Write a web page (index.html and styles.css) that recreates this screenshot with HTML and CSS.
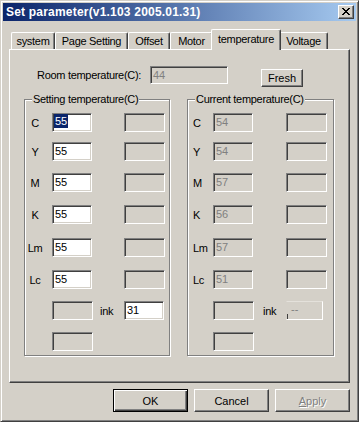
FILE: index.html
```html
<!DOCTYPE html>
<html>
<head>
<meta charset="utf-8">
<title>Set parameter</title>
<link rel="stylesheet" href="styles.css">
</head>
<body>
<div class="window">
  <div class="titlebar">
    <span class="title">Set parameter(v1.103 2005.01.31)</span>
    <div class="close">
      <svg width="14" height="12" viewBox="0 0 14 12" shape-rendering="crispEdges"><path fill="#000" d="M3 2h2v1h-2zM9 2h2v1h-2zM4 3h2v1h-2zM8 3h2v1h-2zM5 4h4v1h-4zM6 5h2v1h-2zM5 6h4v1h-4zM4 7h2v1h-2zM8 7h2v1h-2zM3 8h2v1h-2zM9 8h2v1h-2z"/></svg>
    </div>
  </div>
  <div class="body">
    <div class="tabs">
      <div class="tab w-system">system</div>
      <div class="tab w-page">Page Setting</div>
      <div class="tab w-offset">Offset</div>
      <div class="tab w-motor">Motor</div>
      <div class="tab tab-active w-temp">temperature</div>
      <div class="tab w-volt">Voltage</div>
    </div>
    <div class="panel">
      <div class="room-row">
        <span class="room-label">Room temperature(C):</span>
        <div class="edit dis room-edit">44</div>
        <div class="btn fresh">Fresh</div>
      </div>
      <div class="groups">
        <div class="group group-set">
          <span class="group-title">Setting temperature(C)</span>
          <div class="grid">
            <span class="lbl">C</span><div class="edit"><span class="sel">55</span></div><span></span><div class="edit box"></div>
            <span class="lbl">Y</span><div class="edit">55</div><span></span><div class="edit box"></div>
            <span class="lbl">M</span><div class="edit">55</div><span></span><div class="edit box"></div>
            <span class="lbl">K</span><div class="edit">55</div><span></span><div class="edit box"></div>
            <span class="lbl">Lm</span><div class="edit">55</div><span></span><div class="edit box"></div>
            <span class="lbl">Lc</span><div class="edit">55</div><span></span><div class="edit box"></div>
            <span></span><div class="edit box"></div><span class="ink-lbl">ink</span><div class="edit ink-edit">31</div>
            <span></span><div class="edit box"></div>
          </div>
        </div>
        <div class="group group-cur">
          <span class="group-title">Current temperature(C)</span>
          <div class="grid">
            <span class="lbl">C</span><div class="edit dis">54</div><span></span><div class="edit box"></div>
            <span class="lbl">Y</span><div class="edit dis">54</div><span></span><div class="edit box"></div>
            <span class="lbl">M</span><div class="edit dis">57</div><span></span><div class="edit box"></div>
            <span class="lbl">K</span><div class="edit dis">56</div><span></span><div class="edit box"></div>
            <span class="lbl">Lm</span><div class="edit dis">57</div><span></span><div class="edit box"></div>
            <span class="lbl">Lc</span><div class="edit dis">51</div><span></span><div class="edit box"></div>
            <span></span><div class="edit box"></div><span class="ink-lbl">ink</span><div class="ink-odd">--</div>
            <span></span><div class="edit box"></div>
          </div>
        </div>
      </div>
    </div>
    <div class="buttons">
      <div class="btn btn-default">OK</div>
      <div class="btn">Cancel</div>
      <div class="btn btn-disabled"><span><u>A</u>pply</span></div>
    </div>
  </div>
</div>
</body>
</html>
```
FILE: styles.css
```css
* { box-sizing: border-box; }
html, body { margin: 0; padding: 0; }
body {
  background: #d4d0c8;
  font-family: "Liberation Sans", Arial, sans-serif;
  font-size: 11px;
  letter-spacing: -0.3px;
  color: #000;
}
.window {
  width: 359px;
  height: 422px;
  border: 1px solid;
  border-color: #d4d0c8 #404040 #404040 #d4d0c8;
  box-shadow: inset 1px 1px #fff, inset -1px -1px #808080;
  padding: 2px;
  background: #d4d0c8;
}
.titlebar {
  height: 18px;
  display: flex;
  align-items: center;
  justify-content: space-between;
  background: linear-gradient(to right, #0a246a, #a6caf0);
  padding: 0 2px 0 3px;
}
.title {
  color: #fff;
  font-weight: bold;
  font-size: 12px;
  letter-spacing: 0.2px;
  line-height: 18px;
  white-space: nowrap;
}
.close {
  width: 16px;
  height: 14px;
  background: #d4d0c8;
  border: 1px solid;
  border-color: #fff #404040 #404040 #fff;
  box-shadow: inset -1px -1px #808080;
}
.close svg { display: block; }
.body { padding: 0 6px; }
.tabs {
  display: flex;
  align-items: flex-end;
  height: 20px;
  margin-top: 8px;
  padding-left: 2px;
}
.tab {
  flex: none;
  height: 17px;
  border-top: 1px solid #fff;
  border-left: 1px solid #fff;
  border-right: 1px solid #404040;
  box-shadow: inset -1px 0 #808080;
  border-radius: 2px 2px 0 0;
  text-align: center;
  line-height: 14px;
  padding-top: 1px;
  white-space: nowrap;
  background: #d4d0c8;
}
.w-system { width: 44px; }
.w-page { width: 73px; }
.w-offset { width: 42px; }
.w-motor { width: 43px; }
.w-temp { width: 70px; }
.w-volt { width: 49px; }
.tab-active {
  height: 21px;
  margin: 0 -2px -1px;
  padding-top: 2px;
  position: relative;
  z-index: 1;
}
.panel {
  height: 334px;
  border-top: 1px solid #fff;
  border-left: 1px solid #fff;
  border-right: 1px solid #404040;
  border-bottom: 1px solid #404040;
  box-shadow: inset -1px -1px #808080;
  padding-top: 16px;
}
.room-row {
  display: flex;
  align-items: flex-start;
  height: 21px;
}
.room-label {
  margin-left: 27px;
  width: 113px;
  line-height: 19px;
  white-space: nowrap;
}
.edit {
  width: 40px;
  height: 19px;
  border: 1px solid;
  border-color: #808080 #fff #fff #808080;
  box-shadow: inset 1px 1px #404040, inset -1px -1px #d4d0c8;
  background: #fff;
  padding-left: 2px;
  line-height: 17px;
  letter-spacing: 0;
  white-space: nowrap;
}
.edit.dis { background: #d4d0c8; color: #808080; }
.edit.box { width: 41px; background: #d4d0c8; }
.room-edit { width: 78px; height: 18px; line-height: 16px; }
.sel {
  display: inline-block;
  vertical-align: top;
  background: #0a246a;
  color: #fff;
  line-height: 14px;
  padding: 0 1px;
  margin-left: -1px;
}
.btn {
  flex: none;
  width: 75px;
  height: 23px;
  border: 1px solid;
  border-color: #fff #404040 #404040 #fff;
  box-shadow: inset -1px -1px #808080;
  display: flex;
  align-items: center;
  justify-content: center;
  background: #d4d0c8;
  letter-spacing: 0;
}
.fresh {
  width: 42px;
  height: 18px;
  margin-left: 33px;
  margin-top: 3px;
}
.btn-default {
  border-color: #000;
  box-shadow: inset 1px 1px #fff, inset -1px -1px #404040, inset -2px -2px #808080;
}
.btn-disabled { color: #808080; text-shadow: 1px 1px #fff; }
.groups {
  display: flex;
  gap: 17px;
  margin-top: 12px;
  margin-left: 14px;
}
.group {
  position: relative;
  height: 257px;
  border: 1px solid #808080;
  box-shadow: inset 1px 1px #fff, 1px 1px #fff;
  padding-top: 13px;
}
.group-set { width: 146px; }
.group-cur { width: 147px; }
.group-title {
  position: absolute;
  top: -7px;
  left: 7px;
  background: #d4d0c8;
  padding: 0 1px;
  line-height: 13px;
  white-space: nowrap;
}
.grid {
  display: grid;
  grid-template-rows: 29px 31px 32px 33px 32px 31px 31px 19px;
  align-items: start;
}
.group-set .grid { grid-template-columns: 27px 40px 32px 41px; }
.group-cur .grid { grid-template-columns: 25px 40px 33px 41px; }
.lbl { line-height: 21px; }
.group-set .lbl { text-align: center; padding-right: 7px; }
.group-cur .lbl { padding-left: 5px; }
.ink-lbl { line-height: 21px; }
.group-set .ink-lbl { padding-left: 8px; }
.group-cur .ink-lbl { padding-left: 10px; }
.ink-edit { width: 40px; }
.ink-odd {
  width: 37px;
  height: 19px;
  border: 1px solid;
  border-color: #e4e1db #fff #fff #d4d0c8;
  background-color: #d4d0c8;
  background-image: linear-gradient(#404040, #404040);
  background-size: 1px 5px;
  background-position: left bottom;
  background-repeat: no-repeat;
  color: #808080;
  padding-left: 4px;
  line-height: 15px;
  letter-spacing: 0;
}
.buttons {
  display: flex;
  justify-content: flex-end;
  gap: 6px;
  margin-top: 6px;
}
```
